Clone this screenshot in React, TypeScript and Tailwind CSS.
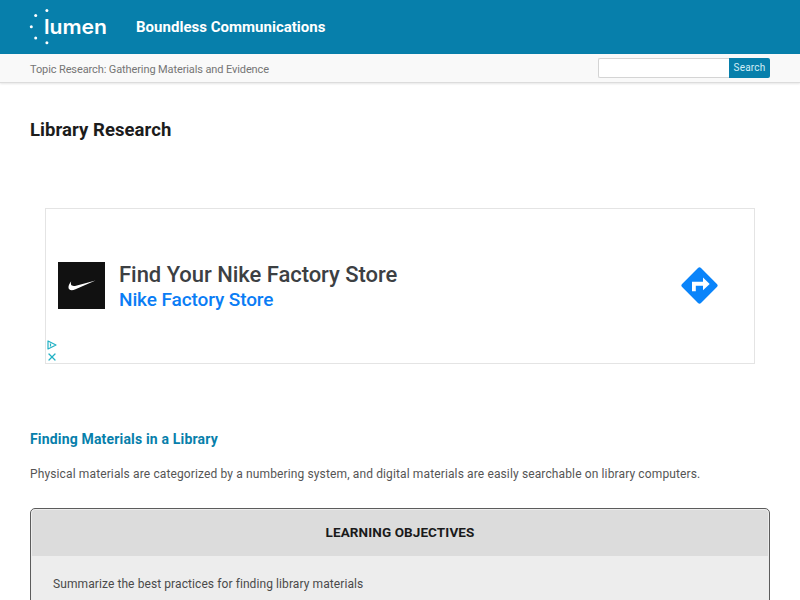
import { X } from 'lucide-react';

function LumenLogo() {
  return (
    <svg width="78" height="38" viewBox="0 0 78 38" fill="#fff" role="img">
      <circle cx="2.3" cy="18.7" r="1.5" />
      <circle cx="6.7" cy="7.4" r="1.5" />
      <circle cx="6.7" cy="30" r="1.5" />
      <circle cx="17.9" cy="2.6" r="1.5" />
      <circle cx="17.9" cy="34.8" r="1.5" />
      <text x="15" y="26" textLength="63" lengthAdjust="spacingAndGlyphs" className="font-['Inter',sans-serif] text-[20px] font-semibold">
        lumen
      </text>
    </svg>
  );
}

function Header() {
  return (
    <header className="flex h-[54px] items-center bg-[#077fab] pl-[29px]">
      <LumenLogo />
      <span className="ml-[29px] text-[15px] leading-5 font-bold tracking-[0.02px] whitespace-nowrap text-white">
        Boundless Communications
      </span>
    </header>
  );
}

function SubNav() {
  return (
    <div className="flex h-[29px] items-center justify-between border-b border-[#dcdcdc] bg-[#f9f9f9] px-[30px] shadow-[0_1px_2px_rgba(0,0,0,0.1)]">
      <span className="pt-[3px] text-[11px] leading-4 tracking-[-0.11px] whitespace-nowrap text-[#757575]">
        Topic Research: Gathering Materials and Evidence
      </span>
      <form className="flex h-5 w-[172px]">
        <input
          type="text"
          aria-label="Search"
          className="w-[131px] rounded-l-[2px] border border-r-0 border-[#d4d4d4] bg-white"
        />
        <button
          type="button"
          className="flex-1 rounded-r-[2px] bg-[#077fab] text-[10px] leading-none tracking-[0.2px] text-[#d3eef6]"
        >
          Search
        </button>
      </form>
    </div>
  );
}

function AdBanner() {
  return (
    <div className="mx-[15px] mt-[66px] flex h-[156px] flex-col border border-[#e4e4e4]">
      <div className="mt-[53.4px] flex h-[47px] items-center pr-[36px] pl-3">
        <div className="flex size-[47px] items-center justify-center bg-[#111]">
          <svg width="28" height="11" viewBox="0 0 28 11" fill="#fff">
            <path d="M27.5 0.5 7.5 9.3C4.8 10.5 2.5 10.6 1.2 9.3-.2 7.8.4 4.6 3.2 1.2 2.6 3.3 2.8 4.9 4 5.6c1 .6 2.5.5 4 .1Z" />
          </svg>
        </div>
        <div className="ml-[14px] pt-[3px] font-medium whitespace-nowrap">
          <div className="text-[22px] leading-[26px] tracking-[-0.04px] text-[#3c4043]">Find Your Nike Factory Store</div>
          <div className="text-[19px] leading-6 tracking-[-0.1px] text-[#0a7df5]">Nike Factory Store</div>
        </div>
        <svg className="ml-auto" width="37" height="37" viewBox="0 0 37 37">
          <path
            d="M17 1.1a2.1 2.1 0 0 1 3 0L35.9 17a2.1 2.1 0 0 1 0 3L20 35.9a2.1 2.1 0 0 1-3 0L1.1 20a2.1 2.1 0 0 1 0-3Z"
            fill="#0a84fa"
          />
          <path d="M11 24.2V14.8h11V10.5l6.7 6.4L22 23.3V18.8h-7.2v5.4Z" fill="#fff" />
        </svg>
      </div>
      <div className="mt-auto ml-px flex flex-col gap-px">
        <svg width="10" height="10" viewBox="0 0 10 10" fill="none" stroke="#22b1c4" strokeWidth="1.2">
          <path d="M1 1v8l8-4Z" strokeLinejoin="round" />
          <path d="M3.5 3.5v3" />
        </svg>
        <X className="-ml-px size-3 text-[#22b1c4]" strokeWidth={2.4} />
      </div>
    </div>
  );
}

function LearningObjectives() {
  return (
    <section className="mt-[24px] h-[140px] rounded-[5px] border-[1.5px] border-[#5c5c5c] bg-[#ededed] p-px">
      <h3 className="flex h-[46px] items-center justify-center rounded-t-[3px] bg-[#dcdcdc] pb-[2px] text-[13.5px] font-bold tracking-[0.1px] text-[#1a1a1a]">
        LEARNING OBJECTIVES
      </h3>
      <p className="mt-[18px] ml-[21px] text-[12px] leading-5 tracking-[0.09px] text-[#4a4a4a]">
        Summarize the best practices for finding library materials
      </p>
    </section>
  );
}

export default function App() {
  return (
    <div className="h-[600px] overflow-hidden bg-white font-['Roboto',sans-serif]">
      <Header />
      <SubNav />
      <main className="px-[30px] pt-[35px]">
        <h1 className="text-[18.5px] leading-6 font-bold tracking-[0.06px] text-[#1c1c1c]">Library Research</h1>
        <AdBanner />
        <h2 className="mt-[65px] text-[14px] leading-5 font-bold tracking-[0.17px] text-[#077fab]">
          Finding Materials in a Library
        </h2>
        <p className="mt-[15px] text-[12px] leading-5 tracking-[0.128px] whitespace-nowrap text-[#555]">
          Physical materials are categorized by a numbering system, and digital materials are easily searchable on
          library computers.
        </p>
        <LearningObjectives />
      </main>
    </div>
  );
}
